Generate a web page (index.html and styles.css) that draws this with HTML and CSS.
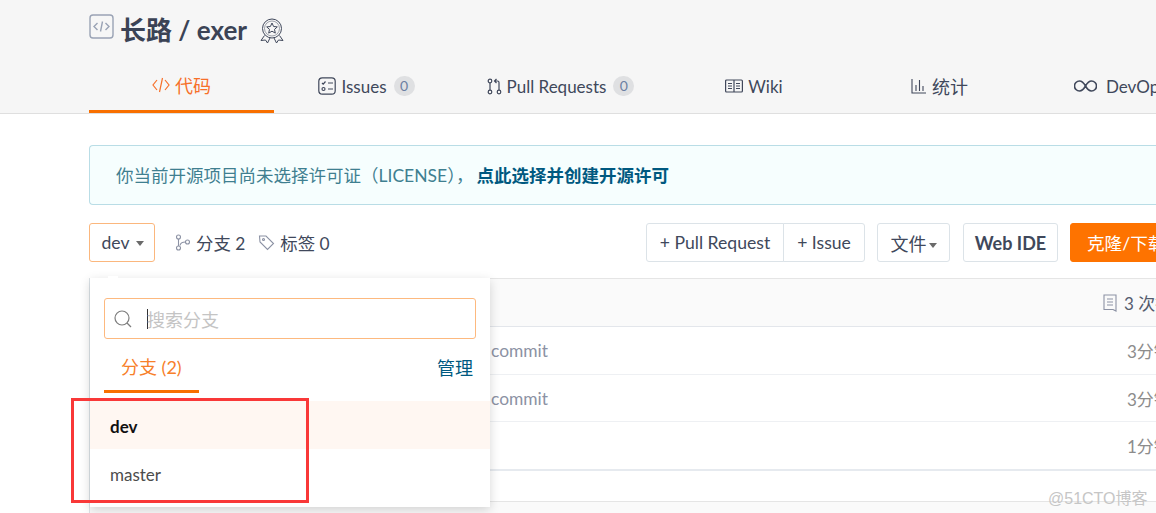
FILE: index.html
```html
<!DOCTYPE html>
<html lang="en">
<head>
    <meta charset="UTF-8">
    <title>长路 / exer</title>
    <link rel="stylesheet" href="styles.css">
</head>
<body>

<div class="page">
    <div class="header">
        <div class="title">
            <svg class="repo-icon" width="25" height="25" viewBox="0 0 25 25" fill="none" stroke="#9aa3b5" stroke-width="1.4">
                <rect x="1" y="1" width="23" height="23" rx="3"/>
                <path d="M8.5 9 5 12.5 8.5 16M16.500 9 20 12.5 16.500 16M13.500 7.500l-2 10"/>
            </svg>
            <h1>长路 / exer</h1>
            <svg class="medal" width="24" height="26" viewBox="0 0 24 26" fill="none" stroke="#40485b" stroke-width="1">
                <circle cx="12" cy="10.500" r="9.500"/>
                <circle cx="12" cy="10.500" r="7.500" stroke-width=".5"/>
                <path d="M12 5l1.600 3.500 3.700.4-2.800 2.500.8 3.700-3.300-1.900-3.300 1.900.8-3.700-2.800-2.500 3.700-.4z"/>
                <path d="M4.500 17.500 1 22.500l4.500-.5 2 3 2.500-5M19.500 17.500l3.500 5-4.500-.5-2 3-2.500-5"/>
            </svg>
        </div>
        <div class="tabs">
            <a class="tab active wide">
                <svg width="18" height="16" viewBox="0 0 18 16" fill="none" stroke="#f7702a" stroke-width="1.200"><path d="M5 3 1 8l4 5M13 3l4 5-4 5M10.500 1 7.500 15"/></svg>
                代码
            </a>
            <a class="tab">
                <svg width="18" height="18" viewBox="0 0 18 18" fill="none" stroke="#40485b" stroke-width="1.200"><rect x=".8" y=".8" width="16.400" height="16.400" rx="3.500"/><path d="M4 6l1.200 1.200L7.500 4.500M10 6h5M10 12h5"/><circle cx="5.500" cy="12" r="1.500"/></svg>
                Issues <span class="badge">0</span>
            </a>
            <a class="tab">
                <svg width="15" height="17" viewBox="0 0 15 17" fill="none" stroke="#40485b" stroke-width="1.200"><circle cx="3" cy="3" r="1.800"/><circle cx="3" cy="14" r="1.800"/><circle cx="12" cy="14" r="1.800"/><path d="M3 5v7M12 12V4.500Q12 3 10.500 3H8M9.500 1 7.500 3l2 2"/></svg>
                Pull Requests <span class="badge">0</span>
            </a>
            <a class="tab">
                <svg width="18" height="14" viewBox="0 0 18 14" fill="none" stroke="#40485b" stroke-width="1.200"><rect x=".6" y="1" width="16.800" height="12" rx="1"/><path d="M9 1v12M3 4.500h4M3 7h4M3 9.500h4M11 4.500h4M11 7h4M11 9.500h4"/></svg>
                Wiki
            </a>
            <a class="tab wide">
                <svg width="16" height="16" viewBox="0 0 16 16" fill="none" stroke="#40485b" stroke-width="1.100"><path d="M1 1v14h14M5 13V7M8.500 13V2M12 13V8"/></svg>
                统计
            </a>
            <a class="tab devops">
                <svg class="infinity" width="23" height="12" viewBox="0 0 23 12" fill="none" stroke="#40485b" stroke-width="1.600"><path d="M11.500 6C9.500 2.500 7.500 1 5.500 1a5 5 0 0 0 0 10c2 0 4-1.500 6-5 2-3.500 4-5 6-5a5 5 0 0 1 0 10c-2 0-4-1.500-6-5z"/></svg>
                DevOps
            </a>
        </div>
    </div>

    <div class="main">
        <div class="notice">
            你当前开源项目尚未选择许可证（LICENSE），<strong>点此选择并创建开源许可</strong>
        </div>

        <div class="toolbar">
            <div class="toolbar-left">
                <button class="btn branch-btn">dev <span class="caret"></span></button>
                <span class="meta">
                    <svg width="16" height="17" viewBox="0 0 16 17" fill="none" stroke="#8c92a4" stroke-width="1.100"><circle cx="3.500" cy="3" r="2"/><circle cx="3.500" cy="14" r="2"/><circle cx="12.500" cy="8" r="2"/><path d="M3.500 5v7M5 11.500Q5.500 8 10.500 8"/></svg>
                    分支 2
                </span>
                <span class="meta">
                    <svg width="17" height="17" viewBox="0 0 17 17" fill="none" stroke="#8c92a4" stroke-width="1.100"><path d="M1.500 2h6.500l7.500 7.500-6 6L2 8z"/><circle cx="5.500" cy="5.500" r="1"/></svg>
                    标签 0
                </span>
            </div>
            <div class="toolbar-right">
                <div class="btn-group">
                    <button class="btn">+ Pull Request</button>
                    <button class="btn">+ Issue</button>
                </div>
                <button class="btn file-btn">文件<span class="caret"></span></button>
                <button class="btn ide">Web IDE</button>
                <button class="btn clone">克隆/下载</button>
            </div>
        </div>

        <div class="files">
            <div class="files-head">
                <span class="commits">
                    <svg width="16" height="18" viewBox="0 0 16 18" fill="none" stroke="#8c92a4" stroke-width="1.100"><path d="M2 1h12v16l-3-1.500H2zM5 5h6M5 8h6M5 11h6"/></svg>
                    3 次提交
                </span>
            </div>
            <div class="file-row"><span class="msg">commit</span><span class="time">3分钟前</span></div>
            <div class="file-row"><span class="msg">commit</span><span class="time">3分钟前</span></div>
            <div class="file-row"><span class="msg"></span><span class="time">1分钟前</span></div>
            <div class="file-spacer"></div>
            <div class="file-foot"></div>
        </div>
    </div>

    <div class="dropdown">
        <div class="search">
            <svg width="20" height="20" viewBox="0 0 20 20" fill="none" stroke="#7d7d7d" stroke-width="1.200"><circle cx="9" cy="9" r="7"/><path d="M14 14l4 4"/></svg>
            <span class="cursor"></span>
            <span class="placeholder">搜索分支</span>
        </div>
        <div class="drop-tabs">
            <span class="drop-tab">分支 (2)</span>
            <a class="manage">管理</a>
        </div>
        <div class="branch current">dev</div>
        <div class="branch">master</div>
    </div>

    <div class="mark"></div>
    <div class="watermark">@51CTO博客</div>
</div>

</body>
</html>
```

FILE: styles.css
```css
* {
    box-sizing: border-box;
}
body {
    margin: 0;
    font-family: Lato, "Noto Sans CJK SC", sans-serif;
    font-size: 16px;
    color: #40485b;
    background: #fff;
}
.page {
    position: relative;
    width: 1156px;
    height: 513px;
    overflow: hidden;
}
.header {
    height: 114px;
    background: #f6f6f6;
    border-bottom: 1px solid #dfdfdf;
    padding-left: 89px;
}
.title {
    display: flex;
    align-items: center;
    height: 60px;
}
.repo-icon {
    margin-top: -7px;
}
h1 {
    margin: 0 13px 0 6px;
    font-size: 26px;
    line-height: 60px;
    font-weight: 700;
    color: #3b4355;
}
.medal {
    margin-top: 1px;
}
.tabs {
    display: grid;
    grid-template-columns: 185px 185px 203px 184px 187px 140px;
    height: 53px;
}
.tab {
    display: flex;
    align-items: center;
    justify-content: center;
    gap: 5px;
    height: 53px;
    padding-bottom: 1px;
    font-size: 17px;
    white-space: nowrap;
}
.tab.wide {
    font-size: 18px;
}
.tab.active {
    color: #f7702a;
    border-bottom: 3px solid #f86f00;
    padding-bottom: 0;
}
.tab.devops {
    justify-content: flex-start;
    padding-left: 41px;
    gap: 9px;
}
.badge {
    display: inline-block;
    width: 21px;
    height: 20px;
    margin-left: 2px;
    border-radius: 10px;
    background: #dfe0e2;
    color: #6b7fa3;
    font-size: 14px;
    line-height: 20px;
    text-align: center;
}
.main {
    width: 1120px;
    margin-left: 89px;
}
.notice {
    height: 60px;
    margin-top: 31px;
    padding-left: 26px;
    border: 1px solid #b9dde6;
    border-right: 0;
    border-radius: 4px 0 0 4px;
    background: #f6fefe;
    color: #3f7f90;
    font-size: 17.5px;
    line-height: 60px;
}
.notice strong {
    margin-left: 3px;
    color: #005980;
}
.toolbar {
    display: flex;
    justify-content: space-between;
    height: 39px;
    margin-top: 18px;
}
.toolbar-left,
.toolbar-right {
    display: flex;
    align-items: center;
}
.toolbar-right {
    gap: 12px;
}
.btn {
    height: 39px;
    padding: 0 12px;
    border: 1px solid #dce3e8;
    border-radius: 3px;
    background: #fff;
    color: #40485b;
    font-family: inherit;
    font-size: 17.6px;
    white-space: nowrap;
}
.branch-btn {
    width: 66px;
    margin-right: 20px;
    padding: 0 0 0 1px;
    border-color: #fbb77d;
}
.caret {
    display: inline-block;
    margin-left: 2px;
    vertical-align: 3px;
    border-left: 4px solid transparent;
    border-right: 4px solid transparent;
    border-top: 5px solid #6a6a6a;
}
.meta {
    display: flex;
    align-items: center;
    gap: 5px;
    margin-right: 13px;
    margin-top: -1px;
    font-size: 17.4px;
}
.btn-group {
    display: flex;
}
.btn-group .btn {
    padding: 0;
}
.btn-group .btn:first-child {
    width: 138px;
    border-radius: 3px 0 0 3px;
}
.btn-group .btn:last-child {
    width: 82px;
    margin-left: -1px;
    border-radius: 0 3px 3px 0;
}
.file-btn {
    width: 73px;
    margin-right: 1px;
    padding: 0;
    font-size: 18px;
}
.ide {
    width: 95px;
    padding: 0;
    font-size: 18px;
    font-weight: 700;
}
.clone {
    width: 139px;
    background: #fe7300;
    border-color: #fe7300;
    color: #fff;
    text-align: left;
    padding-left: 16px;
}
.files {
    margin-top: 16px;
    border-left: 1px solid #dce3e8;
    border-top: 1px solid #e5e5e5;
}
.files-head {
    display: flex;
    align-items: center;
    justify-content: flex-end;
    height: 48px;
    background: #fafafa;
    border-bottom: 1px solid #e3e6eb;
}
.commits {
    display: flex;
    align-items: center;
    gap: 6px;
    width: 107px;
    font-size: 17px;
    color: #545c6e;
}
.file-row {
    display: flex;
    align-items: center;
    justify-content: space-between;
    height: 48px;
    padding-left: 401px;
    border-bottom: 1px solid #eef0f3;
    font-size: 17.4px;
}
.file-row:nth-of-type(3) {
    height: 47px;
}
.file-row:nth-of-type(4) {
    height: 49px;
    border-bottom: 2px solid #e6eaef;
}
.msg {
    color: #8c92a4;
}
.time {
    width: 82px;
    font-size: 17px;
    color: #8c8c8c;
}
.file-spacer {
    height: 31px;
    border-bottom: 1px solid #e5e5e5;
}
.file-foot {
    height: 20px;
    background: #fafafa;
}
.dropdown {
    position: absolute;
    left: 90px;
    top: 278px;
    width: 400px;
    height: 229px;
    background: #fff;
    box-shadow: 0 3px 10px rgba(0, 0, 0, .16);
}
.dropdown::before {
    content: "";
    position: absolute;
    left: 18px;
    top: -2px;
    width: 10px;
    height: 3px;
    background: #fff;
}
.search {
    display: flex;
    align-items: center;
    height: 41px;
    margin: 20px 14px 0;
    padding-left: 8px;
    border: 1px solid #fdb97f;
    border-radius: 3px;
}
.cursor {
    width: 1px;
    height: 20px;
    margin-left: 14px;
    margin-right: -1px;
    background: #333;
}
.placeholder {
    color: #c4c4c4;
    font-size: 18px;
}
.drop-tabs {
    display: flex;
    align-items: center;
    justify-content: space-between;
    height: 52px;
    margin: 0 17px 0 14px;
    padding-top: 3px;
}
.drop-tab {
    width: 95px;
    height: 52px;
    padding: 12px 0 0 17px;
    border-bottom: 3px solid #f86f00;
    color: #f7802a;
    font-size: 18px;
}
.manage {
    color: #005980;
    font-size: 18px;
}
.branch {
    height: 48px;
    padding-left: 20px;
    font-size: 17px;
    line-height: 51px;
    color: #4c4c4c;
}
.drop-tabs + .branch {
    margin-top: 10px;
}
.current {
    background: #fff7f2;
    color: #111;
    font-weight: 700;
}
.mark {
    position: absolute;
    left: 71px;
    top: 398px;
    width: 238px;
    height: 105px;
    border: 3px solid #f93838;
}
.watermark {
    position: absolute;
    left: 1048px;
    top: 485px;
    color: #c6c6c6;
    font-family: "Liberation Sans", "Noto Sans CJK SC", sans-serif;
    font-size: 16px;
}
```
